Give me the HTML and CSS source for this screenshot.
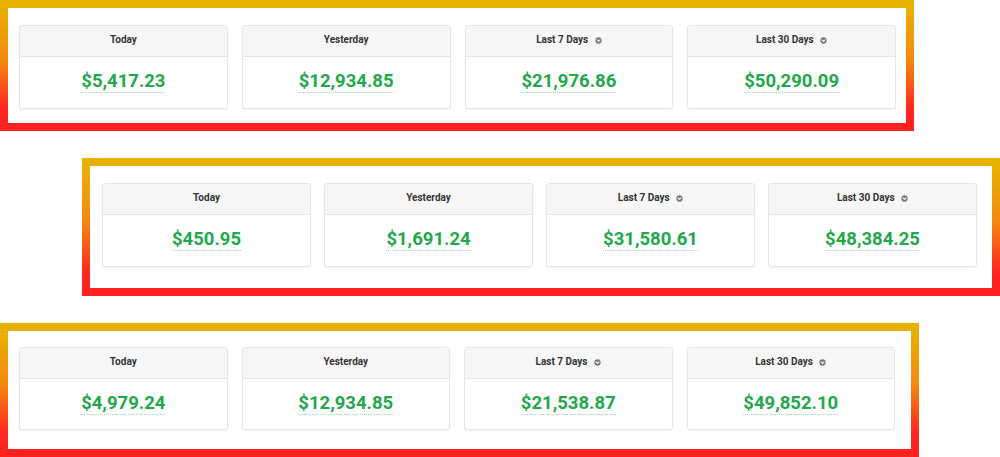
FILE: index.html
```html
<!DOCTYPE html>
<html>
<head>
<meta charset="utf-8">
<link rel="stylesheet" href="styles.css">
</head>
<body>
<div class="page">
  <section class="panel panel-a">
    <div class="card"><div class="card-head">Today</div><div class="card-body"><span class="value">$5,417.23</span></div></div>
    <div class="card"><div class="card-head">Yesterday</div><div class="card-body"><span class="value">$12,934.85</span></div></div>
    <div class="card"><div class="card-head">Last 7 Days <svg class="chev" viewBox="0 0 8 8"><circle cx="4" cy="4" r="3.6"/><polyline points="2.3,3.3 4,5 5.7,3.3"/></svg></div><div class="card-body"><span class="value">$21,976.86</span></div></div>
    <div class="card"><div class="card-head">Last 30 Days <svg class="chev" viewBox="0 0 8 8"><circle cx="4" cy="4" r="3.6"/><polyline points="2.3,3.3 4,5 5.7,3.3"/></svg></div><div class="card-body"><span class="value">$50,290.09</span></div></div>
  </section>
  <section class="panel panel-b">
    <div class="card"><div class="card-head">Today</div><div class="card-body"><span class="value">$450.95</span></div></div>
    <div class="card"><div class="card-head">Yesterday</div><div class="card-body"><span class="value">$1,691.24</span></div></div>
    <div class="card"><div class="card-head">Last 7 Days <svg class="chev" viewBox="0 0 8 8"><circle cx="4" cy="4" r="3.6"/><polyline points="2.3,3.3 4,5 5.7,3.3"/></svg></div><div class="card-body"><span class="value">$31,580.61</span></div></div>
    <div class="card"><div class="card-head">Last 30 Days <svg class="chev" viewBox="0 0 8 8"><circle cx="4" cy="4" r="3.6"/><polyline points="2.3,3.3 4,5 5.7,3.3"/></svg></div><div class="card-body"><span class="value">$48,384.25</span></div></div>
  </section>
  <section class="panel panel-c">
    <div class="card"><div class="card-head">Today</div><div class="card-body"><span class="value">$4,979.24</span></div></div>
    <div class="card"><div class="card-head">Yesterday</div><div class="card-body"><span class="value">$12,934.85</span></div></div>
    <div class="card"><div class="card-head">Last 7 Days <svg class="chev" viewBox="0 0 8 8"><circle cx="4" cy="4" r="3.6"/><polyline points="2.3,3.3 4,5 5.7,3.3"/></svg></div><div class="card-body"><span class="value">$21,538.87</span></div></div>
    <div class="card"><div class="card-head">Last 30 Days <svg class="chev" viewBox="0 0 8 8"><circle cx="4" cy="4" r="3.6"/><polyline points="2.3,3.3 4,5 5.7,3.3"/></svg></div><div class="card-body"><span class="value">$49,852.10</span></div></div>
  </section>
</div>
</body>
</html>
```
FILE: styles.css
```css
* { box-sizing: border-box; }
html, body { margin: 0; padding: 0; background: #fff; }
body { font-family: Roboto, "Liberation Sans", Arial, sans-serif; }
.page {
  width: 1000px;
  height: 457px;
  display: flex;
  flex-direction: column;
  gap: 27px;
  overflow: hidden;
}
.panel {
  display: flex;
  gap: 14px;
  border: 8px solid #e9b000;
  border-image: linear-gradient(to bottom, #e9b100 0%, #f38a10 45%, #ff2a1e 85%, #ff2020 100%) 1;
  background: #fff;
  align-items: flex-start;
}
.panel-a { width: 914px; height: 131px; padding: 17px 10px 0 11px; }
.panel-b { width: 918px; height: 138px; padding: 17px 15px 0 12px; margin-left: 82px; gap: 13px; }
.panel-c { width: 919px; height: 134px; padding: 16px 16px 0 11px; }
.card {
  flex: 1 1 0;
  height: 84px;
  border: 1px solid #e6e6e6;
  border-radius: 3px;
  box-shadow: 0 1px 2px rgba(0,0,0,0.06);
  background: #fff;
  overflow: hidden;
}
.panel-c .card { height: 83px; }
.card-head {
  height: 31px;
  line-height: 27px;
  background: #f6f6f6;
  border-bottom: 1px solid #e6e6e6;
  text-align: center;
  font-size: 10px;
  font-weight: 700;
  color: #333;
}
.chev {
  width: 7px;
  height: 7px;
  margin-left: 4px;
  vertical-align: -0.5px;
}
.chev circle { fill: #777; }
.chev polyline { fill: none; stroke: #fff; stroke-width: 1.2; stroke-linecap: round; stroke-linejoin: round; }
.card-body {
  text-align: center;
  padding-top: 14px;
}
.value {
  display: inline-block;
  font-size: 18.5px;
  line-height: 21px;
  font-weight: 700;
  color: #22a84a;
  border-bottom: 1px dotted #9fd6ac;
}
```
